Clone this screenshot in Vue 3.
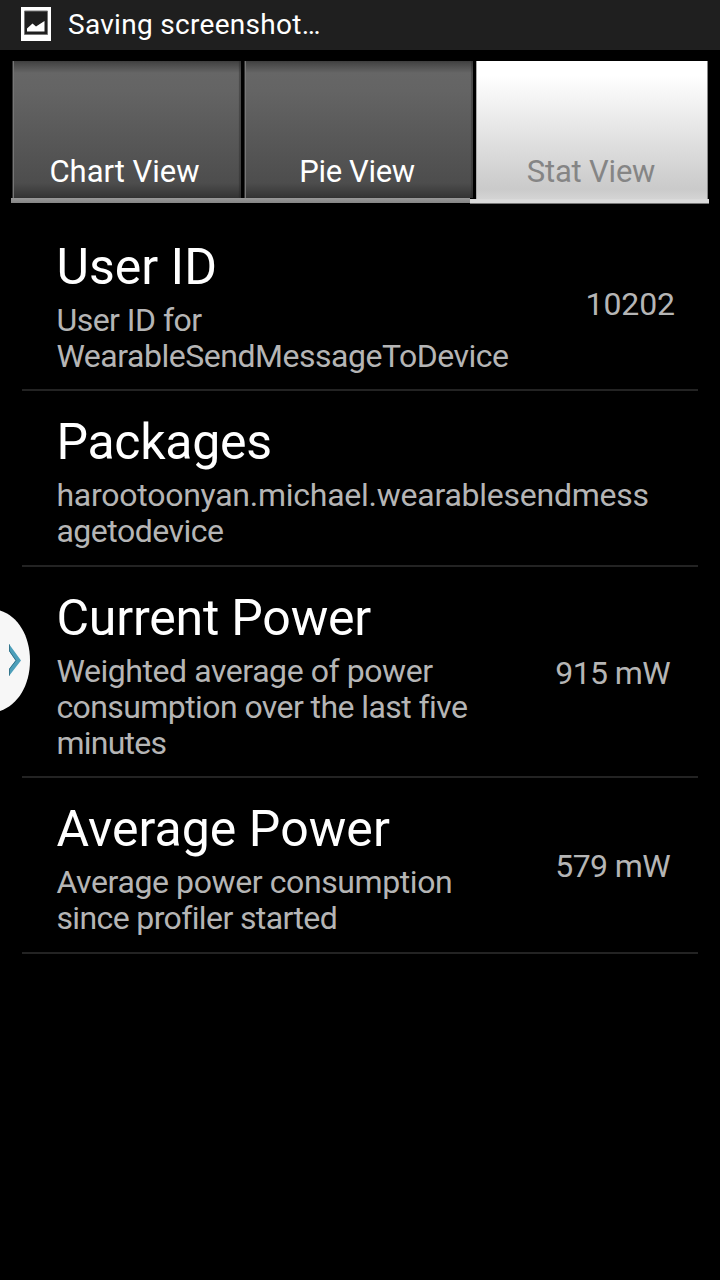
<script setup>
const tabs = [
  { label: 'Chart View', id: 'chart' },
  { label: 'Pie View', id: 'pie' },
  { label: 'Stat View', id: 'stat' }
]
// Each text carries its own tracking in pixels.
const rows = [
  {
    id: 'user', title: 'User ID', track: 0, value: '10202', valueTrack: -0.1,
    lines: [{ text: 'User ID for', track: -0.52 }, { text: 'WearableSendMessageToDevice', track: -0.48 }]
  },
  {
    id: 'pack', title: 'Packages', track: -0.3, value: '', valueTrack: 0,
    lines: [{ text: 'harootoonyan.michael.wearablesendmess', track: -0.25 }, { text: 'agetodevice', track: -0.5 }]
  },
  {
    id: 'cur', title: 'Current Power', track: -0.2, value: '915 mW', valueTrack: -0.6,
    lines: [{ text: 'Weighted average of power', track: -0.43 }, { text: 'consumption over the last five', track: -0.58 }, { text: 'minutes', track: -0.75 }]
  },
  {
    id: 'avg', title: 'Average Power', track: 0.05, value: '579 mW', valueTrack: -0.6,
    lines: [{ text: 'Average power consumption', track: -0.4 }, { text: 'since profiler started', track: -0.62 }]
  }
]
const spacing = (n) => ({ letterSpacing: n + 'px' })
</script>

<template>
  <div class="screen">
    <header class="status">
      <svg width="30" height="34" viewBox="0 0 30 34">
        <path fill="#fff" fill-rule="evenodd" d="M0 0H30V34H0ZM3.5 4V27.5H26.5V4Z" />
        <path fill="none" stroke="#777" d="M3.5 4V27.5H26.5V4Z" />
        <path fill="#fff" d="M6 24.5V21.5L11.5 16.5L15 19.5L23.5 14V24.5Z" />
      </svg>
      <span>Saving screenshot…</span>
    </header>
    <nav class="tabs">
      <div v-for="t in tabs" :key="t.id" class="tab" :class="t.id"><span>{{ t.label }}</span></div>
    </nav>
    <div class="strip"><i></i><b></b></div>
    <main>
      <section v-for="r in rows" :key="r.id" class="row" :class="r.id">
        <div class="copy">
          <h2 :style="spacing(r.track)">{{ r.title }}</h2>
          <p v-for="l in r.lines" :key="l.text" :style="spacing(l.track)">{{ l.text }}</p>
        </div>
        <div v-if="r.value" class="value" :style="spacing(r.valueTrack)">{{ r.value }}</div>
      </section>
    </main>
    <svg class="handle" width="31" height="104" viewBox="0 0 31 104">
      <path fill="#f7f7f7" d="M0 1.5C18 7 30 27 30 51.5S18 96 0 102Z" />
      <path fill="#4d9fba" d="M9 35L21 51.5L9 67V60L15.5 51.5L9 42Z" />
      <path fill="none" stroke="#35768d" stroke-width="1" d="M9.5 35.5V42L16 51.5L9.5 60V66.5" />
    </svg>
  </div>
</template>

<style>
body { background: #000; }
</style>
<style scoped>
.screen { position: relative; width: 720px; height: 1280px; overflow: hidden; background: #000; color: #fff; font-family: Roboto, sans-serif; }
.status { height: 50px; background: #1f1f1f; display: flex; align-items: center; padding: 0 0 2px 21px; gap: 17px; font-size: 28px; letter-spacing: .3px; box-sizing: border-box; }
.tabs { display: grid; grid-template-columns: 229px 229px 232px; column-gap: 3px; padding: 11px 12px 0; height: 148px; box-sizing: border-box; }
.tab { display: flex; align-items: flex-end; justify-content: center; padding-bottom: 7px; font-size: 31px; line-height: 38px; box-sizing: border-box; background: linear-gradient(#404040, #666 12px, #646464 30px, #4d4d4d 122px, #333); box-shadow: inset -2px 0 1px #2226, inset 1px 0 #333, inset 2px 0 #777; }
.chart { padding-right: 4px; }
.pie { padding-right: 3px; letter-spacing: -.35px; }
.stat { padding-right: 2px; padding-bottom: 8px; margin-bottom: -1px; letter-spacing: -.2px; background: linear-gradient(#fff 14px, #cacaca 128px, #d4d4d4); color: #858585; box-shadow: inset -1px 0 #888, inset 1px 0 #aaa; }
.strip { display: flex; align-items: flex-start; margin: 0 11px; height: 6px; }
.strip i { width: 459px; height: 5px; background: linear-gradient(#989898, #858585); }
.strip b { flex: 1; height: 5px; margin-top: 1px; background: linear-gradient(#dadada 80%, #777 80%); }
main { margin: 11px 22px 0; }
.row { display: flex; justify-content: space-between; box-sizing: border-box; border-bottom: 2px solid #232323; padding: 23px 22px 0 35px; height: 176px; }
.user { padding-top: 24px; }
.user .value { margin-bottom: 21px; }
.cur { height: 211px; }
.copy { white-space: nowrap; }
h2 { margin: 0 0 6px; font-size: 50px; line-height: 57px; font-weight: 400; position: relative; left: -.5px; }
p { margin: 0; font-size: 32px; line-height: 36px; color: #b5b5b5; position: relative; left: -.6px; }
.value { font-size: 32px; color: #b5b5b5; line-height: 36px; align-self: center; margin-bottom: 20px; margin-right: 1px; white-space: nowrap; }
.cur .value, .avg .value { margin-right: 6px; }
.avg .value { margin-bottom: 22px; }
.handle { position: absolute; left: 0; top: 609px; }
</style>
